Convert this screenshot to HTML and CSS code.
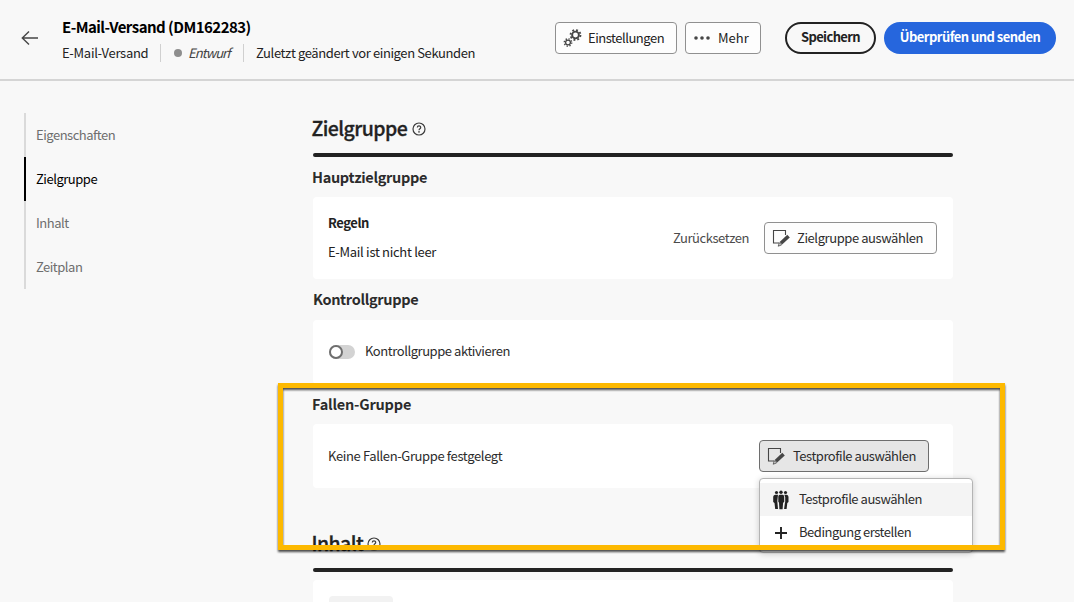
FILE: index.html
```
<!DOCTYPE html>
<html lang="de">
<head>
<meta charset="utf-8">
<title>E-Mail-Versand (DM162283)</title>
<link rel="stylesheet" href="styles.css">
</head>
<body>
<svg class="defs" width="0" height="0">
  <symbol id="edit" viewBox="0 0 18 18">
    <path d="M7 14H1.500V1.500H13.500V6" fill="none" stroke="#464646" stroke-width="1.1"/>
    <path d="M15.300 5.800l2.500 2.600-7.700 7.200L7.600 13z" fill="#464646"/>
    <path d="M7.400 13.700l2.200 2.200-3.400 1.300z" fill="#ddd" stroke="#464646" stroke-width=".8"/>
  </symbol>
  <symbol id="help" viewBox="0 0 14 14">
    <circle cx="7" cy="7" r="6" fill="none" stroke="#3c3c3c" stroke-width="1.200"/>
    <path d="M5.300 5.600C5.300 3.400 8.700 3.400 8.700 5.500 8.700 6.800 7 6.700 7 8.200" fill="none" stroke="#3c3c3c" stroke-width="1.200"/>
    <circle cx="7" cy="9.900" r=".8" fill="#3c3c3c"/>
  </symbol>
</svg>

<header class="topbar">
  <svg class="back" width="18" height="16" viewBox="0 0 18 16" fill="none" stroke="#464646" stroke-width="1.400"><path d="M17 8H1.500M8 1.500L1.300 8 8 14.500"/></svg>
  <div class="heading">
    <h1 class="title">E-Mail-Versand (DM162283)</h1>
    <div class="meta">
      <span class="meta-type">E-Mail-Versand</span>
      <span class="meta-status"><i class="dot"></i><em>Entwurf</em></span>
      <span class="meta-time">Zuletzt geändert vor einigen Sekunden</span>
    </div>
  </div>
  <div class="actions">
    <button class="btn btn-settings">
      <svg width="20" height="20" viewBox="0 0 20 20" fill="none" stroke="#464646">
        <circle cx="12.500" cy="7" r="3.400" stroke-width="1.900"/>
        <circle cx="12.500" cy="7" r="5" stroke-width="1.800" stroke-dasharray="1.900 2.027"/>
        <circle cx="5" cy="14.500" r="2.400" stroke-width="1.300"/>
        <circle cx="5" cy="14.500" r="3.700" stroke-width="1.400" stroke-dasharray="1.350 1.556"/>
      </svg>
      <span>Einstellungen</span>
    </button>
    <button class="btn btn-more">
      <svg width="16" height="4" viewBox="0 0 16 4" fill="#464646"><circle cx="2" cy="2" r="1.800"/><circle cx="8" cy="2" r="1.800"/><circle cx="14" cy="2" r="1.800"/></svg>
      <span>Mehr</span>
    </button>
    <button class="pill pill-save"><span>Speichern</span></button>
    <button class="pill pill-send"><span>Überprüfen und senden</span></button>
  </div>
</header>

<div class="layout">
  <nav class="steps">
    <a class="step">Eigenschaften</a>
    <a class="step active">Zielgruppe</a>
    <a class="step">Inhalt</a>
    <a class="step">Zeitplan</a>
  </nav>
  <main class="content">
    <h2 class="section"><span>Zielgruppe</span><svg width="14" height="14"><use href="#help"/></svg></h2>
    <h3 class="sub"><span>Hauptzielgruppe</span></h3>
    <div class="card card-main">
      <div class="rules"><b>Regeln</b><span class="rule-text">E-Mail ist nicht leer</span></div>
      <a class="reset">Zurücksetzen</a>
      <button class="btn btn-audience"><svg width="18" height="18"><use href="#edit"/></svg><span>Zielgruppe auswählen</span></button>
    </div>
    <h3 class="sub sub-control"><span>Kontrollgruppe</span></h3>
    <div class="card card-control"><i class="switch"></i><span class="control-label">Kontrollgruppe aktivieren</span></div>
    <h3 class="sub sub-trap"><span>Fallen-Gruppe</span></h3>
    <div class="card card-trap">
      <span class="trap-label">Keine Fallen-Gruppe festgelegt</span>
      <div class="picker">
        <button class="btn btn-test"><svg width="18" height="18"><use href="#edit"/></svg><span>Testprofile auswählen</span></button>
        <div class="menu">
          <div class="item hover">
            <svg width="18" height="20" viewBox="0 0 18 20" fill="#222">
              <circle cx="4.500" cy="2.500" r="1.600"/><circle cx="9" cy="2.300" r="1.700"/><circle cx="13.500" cy="2.500" r="1.600"/>
              <path d="M3.500 4.700h2.500L5.300 11l.7 8H3.200L2.500 13 1.200 12V7.500C1.200 5.700 2 4.700 3.500 4.700z"/>
              <path d="M8 4.700h2.500c1.300 0 1.700 1 1.700 2.500V12l-1.100.8-.5 6.500H7.400L7 12.500 6.300 12V7.500C6.300 5.700 6.700 4.700 8 4.700z"/>
              <path d="M12.300 4.700h2c1.500 0 2.200 1 2.200 2.500V12l-1.200 1-.7 6h-2.500l.8-6 .3-1V7z"/>
            </svg>
            <span>Testprofile auswählen</span>
          </div>
          <div class="item">
            <svg width="18" height="18" viewBox="0 0 18 18" stroke="#222" stroke-width="1.900"><path d="M9 3v12M3 9h12"/></svg>
            <span>Bedingung erstellen</span>
          </div>
        </div>
      </div>
    </div>
    <h2 class="section section-content"><span>Inhalt</span><svg width="14" height="14"><use href="#help"/></svg></h2>
    <div class="card card-content"><div class="placeholder"></div></div>
  </main>
</div>
<div class="highlight"></div>
</body>
</html>
```
FILE: styles.css
```
*, *::before, *::after { box-sizing: border-box; }
body { margin: 0; width: 1074px; height: 602px; overflow: hidden; position: relative; background: #f8f8f8; color: #222; font: 13px/20px "Noto Sans CJK SC", "Noto Sans", sans-serif; letter-spacing: -0.44px; }
h1, h2, h3 { margin: 0; }
span, em, b, a { white-space: nowrap; }
svg { flex: none; display: block; }
.defs { position: absolute; }
button { font: inherit; color: inherit; letter-spacing: inherit; margin: 0; }

.topbar { display: flex; height: 81px; border-bottom: 2px solid #d5d5d5; padding: 0 18px 0 21px; }
.back { margin-top: 30px; }
.heading { padding: 17px 0 0 23px; flex: 1; }
.title { font-size: 15px; line-height: 20px; font-weight: 700; color: #000; white-space: nowrap; letter-spacing: -0.53px; }
.meta { display: flex; align-items: center; margin-top: 7px; height: 18px; }
.meta > span { padding-bottom: 1px; }
.meta-type { width: 98px; letter-spacing: -0.29px; }
.meta-status { display: flex; align-items: center; gap: 6px; width: 84px; height: 18px; padding-left: 13px; border-left: 1px solid #d0d0d0; border-right: 1px solid #d0d0d0; }
.meta-time { padding-left: 12px; letter-spacing: -0.39px; }
.meta-status em { color: #444; letter-spacing: -0.94px; }
.dot { width: 8px; height: 8px; border-radius: 50%; background: #8e8e8e; }
.actions { display: flex; padding-top: 22px; }
.btn { display: flex; align-items: center; height: 32px; padding: 0 0 0 7px; background: #fdfdfd; border: 1px solid #909090; border-radius: 4px; }
.btn-settings { width: 122px; gap: 5px; margin-right: 8px; letter-spacing: -0.48px; }
.btn-more { width: 76px; gap: 8px; padding-left: 8px; margin-right: 24px; letter-spacing: 0; }
.pill { height: 32px; border-radius: 16px; font-weight: 700; line-height: 20px; padding: 0 0 2px; }
.pill-save { width: 91px; border: 2px solid #222; background: transparent; margin-right: 8px; letter-spacing: -0.62px; }
.pill-send { width: 172px; border: 0; background: #2666dd; color: #fff; letter-spacing: -0.53px; }

.layout { display: flex; padding-left: 24px; }
.steps { width: 289px; padding-top: 32px; }
.step { display: block; height: 44px; line-height: 44px; padding-left: 10px; border-left: 2px solid #dadada; color: #6e6e6e; letter-spacing: -0.48px; }
.step.active { border-color: #000; color: #000; }
.content { width: 640px; padding-top: 35px; }
.section { display: flex; align-items: center; gap: 5px; height: 41px; padding-bottom: 15px; font-size: 19.5px; line-height: 26px; font-weight: 500; position: relative; letter-spacing: -0.56px; }
.section span { margin: -2px 0 0 -1.5px; -webkit-text-stroke: .3px #222; }
.sub span { margin-left: -1px; }
.section::after { content: ""; position: absolute; left: 0; right: 0; bottom: 0; height: 4px; border-radius: 2px; background: #222; }
.sub { height: 40px; padding-top: 10px; font-size: 14.5px; line-height: 20px; font-weight: 700; color: #2c2c2c; letter-spacing: -0.33px; }
.sub-control span { margin-left: 0; }
.sub-trap { letter-spacing: -0.2px; }
.card { background: #fff; border-radius: 4px; display: flex; align-items: center; padding: 0 16px 0 15px; color: #2c2c2c; }
.card-main { height: 82px; }
.rules { display: flex; flex-direction: column; gap: 9px; flex: 1; color: #222; padding-bottom: 2px; }
.rule-text { letter-spacing: -0.3px; }
.reset { margin-right: 15px; color: #4b4b4b; }
.btn-audience { width: 173px; gap: 7px; letter-spacing: -0.42px; }
.sub-control { height: 41px; padding-top: 10px; }
.card-control { height: 64px; padding-left: 16px; }
.control-label { padding-bottom: 2px; }
.switch { width: 26px; height: 14px; border-radius: 7px; background: #d3d3d3; position: relative; margin-right: 10px; }
.switch::before { content: ""; position: absolute; left: 0; top: 0; width: 14px; height: 14px; border: 2px solid #6e6e6e; border-radius: 50%; background: #fff; }
.card-trap { height: 64px; justify-content: space-between; }
.trap-label { letter-spacing: -0.37px; }
.picker { position: relative; margin-right: 8px; }
.btn-test { width: 170px; gap: 8px; background: #e6e6e6; border-color: #6e6e6e; letter-spacing: -0.47px; }
.menu { position: absolute; z-index: 2; left: 0; top: 38px; width: 214px; height: 75px; padding: 4px 0; background: #fff; border: 1px solid #b4b4b4; border-radius: 4px; box-shadow: 0 1px 6px rgba(0,0,0,.18); letter-spacing: -0.47px; }
.item { display: flex; align-items: center; gap: 9px; height: 33px; padding-left: 12px; }
.item span { padding-bottom: 1px; }
.item.hover { background: #f4f4f4; }
.section-content { margin-top: 42px; height: 42px; gap: 4px; }
.card-content { margin-top: 8px; height: 22px; border-radius: 4px 4px 0 0; align-items: flex-start; padding: 16px 16px 0; }
.placeholder { width: 64px; height: 6px; border-radius: 4px 4px 0 0; background: #f2f2f2; }
.highlight { position: absolute; z-index: 5; left: 278px; top: 383px; width: 727px; height: 167px; border: 5px solid #fdb900; filter: drop-shadow(0 2px 1px rgba(0,0,0,.7)); }
```
